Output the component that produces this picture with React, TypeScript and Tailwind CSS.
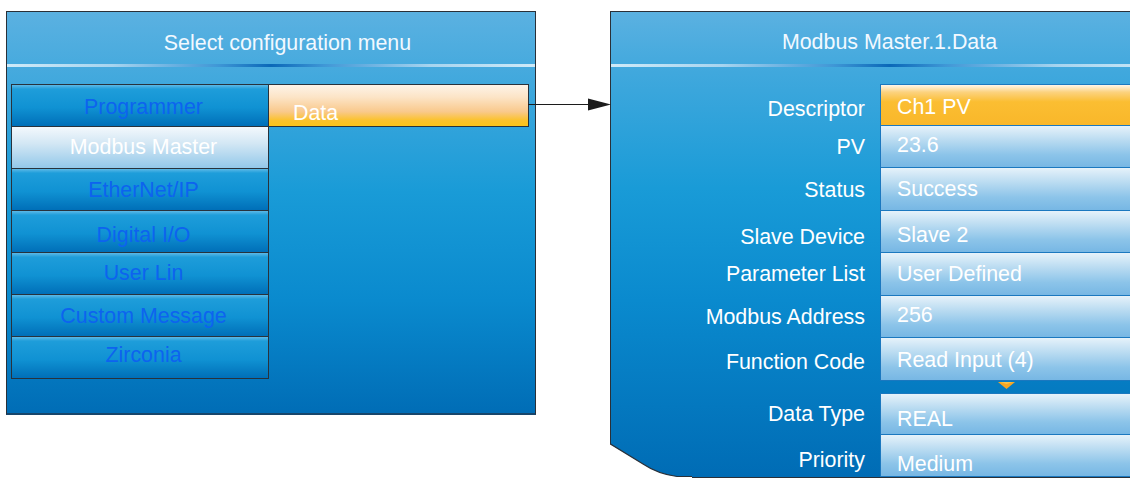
import React from "react";

const listItems: { label: string; selected?: boolean; off: string }[] = [
  { label: "Programmer", off: "translate-y-[1px]" },
  { label: "Modbus Master", selected: true, off: "-translate-y-[1px]" },
  { label: "EtherNet/IP", off: "translate-y-0" },
  { label: "Digital I/O", off: "translate-y-[3px]" },
  { label: "User Lin", off: "-translate-y-[1px]" },
  { label: "Custom Message", off: "translate-y-0" },
  { label: "Zirconia", off: "-translate-y-[3px]" },
];

type Row = {
  label: string;
  value: string;
  h: string;
  lOff: string;
  vOff: string;
  active?: boolean;
  first?: boolean;
};

const rowsA: Row[] = [
  { label: "Descriptor", value: "Ch1 PV", h: "h-[42px]", lOff: "translate-y-[3px]", vOff: "translate-y-[1px]", active: true, first: true },
  { label: "PV", value: "23.6", h: "h-[42px]", lOff: "-translate-y-[1px]", vOff: "-translate-y-[2px]" },
  { label: "Status", value: "Success", h: "h-[43px]", lOff: "translate-y-0", vOff: "-translate-y-[1px]" },
  { label: "Slave Device", value: "Slave 2", h: "h-[42px]", lOff: "translate-y-[4px]", vOff: "translate-y-[3px]" },
  { label: "Parameter List", value: "User Defined", h: "h-[43px]", lOff: "-translate-y-[1px]", vOff: "-translate-y-[1px]" },
  { label: "Modbus Address", value: "256", h: "h-[42px]", lOff: "-translate-y-[1px]", vOff: "-translate-y-[2px]" },
  { label: "Function Code", value: "Read Input (4)", h: "h-[43px]", lOff: "translate-y-[2px]", vOff: "translate-y-0" },
];

const rowsB: Row[] = [
  { label: "Data Type", value: "REAL", h: "h-[42px]", lOff: "-translate-y-[1px]", vOff: "translate-y-[4px]", first: true },
  { label: "Priority", value: "Medium", h: "h-[42px]", lOff: "translate-y-[3px]", vOff: "translate-y-[8px]" },
];

function Separator() {
  return (
    <div className="h-[3px] w-full bg-[linear-gradient(to_right,#cfeaf8_0%,#a6d4ef_20%,#3f97d6_40%,#0a68b8_50%,#3f97d6_60%,#a6d4ef_80%,#cfeaf8_100%)]" />
  );
}

function ParamRow({ r }: { r: Row }) {
  return (
    <div className={`flex ${r.h}`}>
      <div className="w-[269px] shrink-0 flex items-center justify-end pt-[3px] pr-[15px] text-white">
        <span className={r.lOff}>{r.label}</span>
      </div>
      <div
        className={`flex-1 flex items-center pt-[3px] pl-[16px] text-white border-l border-b border-[#1b78bf] ${
          r.first ? "border-t" : ""
        } ${
          r.active
            ? "bg-[linear-gradient(to_bottom,#fff6e8_0%,#fcd27e_18%,#fbbe32_42%,#f9b72a_100%)]"
            : "bg-[linear-gradient(to_bottom,#e6f2fa_0%,#b9dbf1_35%,#8cc4e9_70%,#77b7e4_100%)]"
        }`}
      >
        <span className={r.vOff}>{r.value}</span>
      </div>
    </div>
  );
}

export default function App() {
  return (
    <div className="relative w-[1130px] h-[478px] overflow-hidden bg-white font-['Liberation_Sans',Arial,sans-serif] text-[21.4px] leading-none">
      <div className="flex items-start pt-[11px] pl-[6px]">
        {/* Left panel */}
        <div className="w-[530px] h-[404px] shrink-0 flex flex-col border border-[#2a3038] border-b-2 border-b-[#17466b] bg-[linear-gradient(to_bottom,#5bb1e1_0%,#40a8dd_18%,#199bd7_45%,#0a8ace_72%,#006db6_100%)]">
          <div className="h-[52px] pt-[11px] pl-[33px] flex items-center justify-center text-[#f2f9ff]">
            Select configuration menu
          </div>
          <Separator />
          <div className="pt-[17px] pl-[4px] flex items-start">
            <div className="w-[258px] flex flex-col border-t border-x border-[#28323c]">
              {listItems.map((it) => (
                <div
                  key={it.label}
                  className={`h-[42px] flex items-center justify-center pt-[3px] pl-[7px] border-b border-[#28323c] ${
                    it.selected
                      ? "bg-[linear-gradient(to_bottom,#f3f8fc_0%,#d3e7f4_40%,#93c8ea_100%)] text-white"
                      : "bg-[linear-gradient(to_bottom,#5cb9e7_0%,#1e9dda_10%,#1092d3_55%,#006fb8_100%)] text-[#0d63ef]"
                  }`}
                >
                  <span className={it.off}>{it.label}</span>
                </div>
              ))}
            </div>
            <div className="w-[260px] h-[43px] border-y border-r border-[#28323c] flex items-center pt-[3px] pl-[24px] text-white bg-[linear-gradient(to_bottom,#fdf3e8_0%,#fce4c6_30%,#f9c98c_65%,#fbc22c_86%,#fcc419_100%)]">
              <span className="translate-y-[7px]">Data</span>
            </div>
          </div>
        </div>

        <div className="w-[74px] shrink-0" />

        {/* Right panel */}
        <div className="relative w-[558px] h-[467px] shrink-0 flex flex-col border-t border-l border-b border-[#2a3038] bg-[linear-gradient(to_bottom,#5bb1e1_0%,#40a8dd_13%,#199bd7_38%,#0a8ace_62%,#006cb5_100%)]">
          <div className="h-[52px] pt-[10px] flex items-center justify-center text-[#f2f9ff]">
            Modbus Master.1.Data
          </div>
          <Separator />
          <div className="pt-[17px] flex flex-col">
            {rowsA.map((r) => (
              <ParamRow key={r.label} r={r} />
            ))}
            <div className="h-[12px] flex">
              <div className="w-[269px] shrink-0" />
              <div className="pl-[118px] pt-[1px]">
                <svg width="17" height="7" viewBox="0 0 17 7">
                  <polygon points="0,0 17,0 8.5,7" fill="#f5a623" />
                  <polygon points="2,0 15,0 8.5,2" fill="#f9c24a" />
                </svg>
              </div>
            </div>
            {rowsB.map((r) => (
              <ParamRow key={r.label} r={r} />
            ))}
          </div>
          <svg
            className="absolute -left-px -bottom-px"
            width="82"
            height="35"
            viewBox="0 0 82 35"
          >
            <path d="M0,1 L33,21 Q48,31 67,33.5 L82,33.5 L82,35 L0,35 Z" fill="#ffffff" />
            <path
              d="M0.5,0 L0.5,1 L33,21 Q48,31 67,33.5 L82,33.5"
              fill="none"
              stroke="#2a3038"
              strokeWidth="1.2"
            />
          </svg>
        </div>
      </div>

      {/* Connector arrow */}
      <svg className="absolute left-[528px] top-[97px]" width="84" height="14" viewBox="0 0 84 14">
        <line x1="0" y1="7.5" x2="62" y2="7.5" stroke="#1c1c1c" strokeWidth="1.2" />
        <polygon points="60,1.5 83,7.5 60,13.5" fill="#1c1c1c" />
      </svg>
    </div>
  );
}
